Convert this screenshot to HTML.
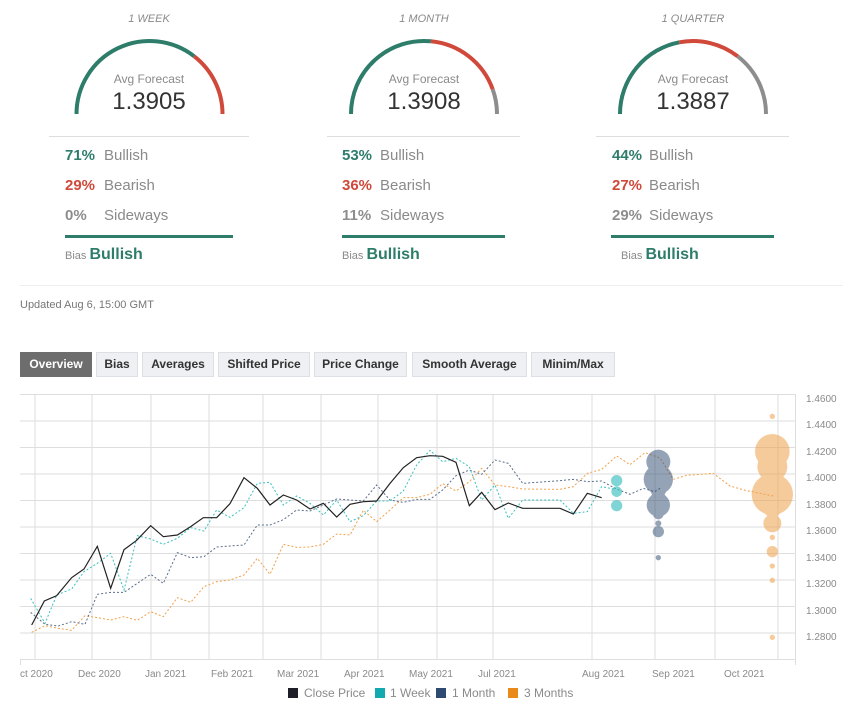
<!DOCTYPE html>
<html><head><meta charset="utf-8"><style>
body{margin:0;width:865px;height:711px;background:#fff;font-family:"Liberation Sans",sans-serif;position:relative;overflow:hidden}
.a{position:absolute;white-space:nowrap}
.t{font-size:11px;font-style:italic;color:#8a8a8a;transform:translateX(-50%)}
.af{font-size:12px;color:#8a8a8a;transform:translateX(-50%)}
.v{font-size:24px;color:#333;transform:translateX(-50%)}
.p{font-size:15px;font-weight:bold}
.l{font-size:15px;color:#8a8a8a}
.g{color:#2e7d6b}.r{color:#d0493a}.s{color:#8d8d8d}
.hl{position:absolute;height:1px;background:#ddd}
.gl{position:absolute;height:3px;background:#2e7d6b}
.tab{position:absolute;top:352px;height:23px;border:1px solid #dcdfe4;background:#eef0f3;font-size:12px;font-weight:bold;color:#333;line-height:23px;text-align:center}
.ax{font-size:10px;fill:#8a8a8a;font-family:"Liberation Sans",sans-serif}
</style></head><body>
<svg class="a" style="left:0;top:0" width="865" height="140">
<g fill="none" stroke-width="4">
<path d="M76.5 114 A73 73 0 0 1 194.2 56.3" stroke="#2e7d6b"/>
<path d="M194.2 56.3 A73 73 0 0 1 222.5 114" stroke="#d0493a"/>
<path d="M351 114 A73 73 0 0 1 430.9 41.3" stroke="#2e7d6b"/>
<path d="M430.9 41.3 A73 73 0 0 1 492.7 89.3" stroke="#d0493a"/>
<path d="M492.7 89.3 A73 73 0 0 1 497 114" stroke="#8d8d8d"/>
<path d="M620 114 A73 73 0 0 1 679.3 42.3" stroke="#2e7d6b"/>
<path d="M679.3 42.3 A73 73 0 0 1 737.7 56.3" stroke="#d0493a"/>
<path d="M737.7 56.3 A73 73 0 0 1 766 114" stroke="#8d8d8d"/>
</g></svg>
<div class="a t" style="left:149px;top:13px">1 WEEK</div>
<div class="a t" style="left:424px;top:13px">1 MONTH</div>
<div class="a t" style="left:693px;top:13px">1 QUARTER</div>
<div class="a af" style="left:149px;top:72px">Avg Forecast</div>
<div class="a af" style="left:424px;top:72px">Avg Forecast</div>
<div class="a af" style="left:693px;top:72px">Avg Forecast</div>
<div class="a v" style="left:149px;top:88px">1.3905</div>
<div class="a v" style="left:424px;top:88px">1.3908</div>
<div class="a v" style="left:693px;top:88px">1.3887</div>
<div class="hl" style="left:49px;top:136px;width:200px"></div>
<div class="hl" style="left:327px;top:136px;width:193px"></div>
<div class="hl" style="left:596px;top:136px;width:193px"></div>

<div class="a p g" style="left:65px;top:147px">71%</div><div class="a l" style="left:104px;top:147px">Bullish</div>
<div class="a p r" style="left:65px;top:177px">29%</div><div class="a l" style="left:104px;top:177px">Bearish</div>
<div class="a p s" style="left:65px;top:207px">0%</div><div class="a l" style="left:104px;top:207px">Sideways</div>
<div class="a p g" style="left:342px;top:147px">53%</div><div class="a l" style="left:380px;top:147px">Bullish</div>
<div class="a p r" style="left:342px;top:177px">36%</div><div class="a l" style="left:380px;top:177px">Bearish</div>
<div class="a p s" style="left:342px;top:207px">11%</div><div class="a l" style="left:380px;top:207px">Sideways</div>
<div class="a p g" style="left:612px;top:147px">44%</div><div class="a l" style="left:649px;top:147px">Bullish</div>
<div class="a p r" style="left:612px;top:177px">27%</div><div class="a l" style="left:649px;top:177px">Bearish</div>
<div class="a p s" style="left:612px;top:207px">29%</div><div class="a l" style="left:649px;top:207px">Sideways</div>
<div class="gl" style="left:65px;top:235px;width:168px"></div>
<div class="gl" style="left:342px;top:235px;width:163px"></div>
<div class="gl" style="left:611px;top:235px;width:163px"></div>
<div class="a" style="left:65px;top:246px"><span style="font-size:11px;color:#8a8a8a">Bias </span><span style="font-size:16px;font-weight:bold;color:#2e7d6b">Bullish</span></div>
<div class="a" style="left:342px;top:246px"><span style="font-size:11px;color:#8a8a8a">Bias </span><span style="font-size:16px;font-weight:bold;color:#2e7d6b">Bullish</span></div>
<div class="a" style="left:621px;top:246px"><span style="font-size:11px;color:#8a8a8a">Bias </span><span style="font-size:16px;font-weight:bold;color:#2e7d6b">Bullish</span></div>
<div class="hl" style="left:20px;top:285px;width:823px;background:#eceef2"></div>
<div class="a" style="left:20px;top:299px;font-size:11px;color:#777">Updated Aug 6, 15:00 GMT</div>

<div class="tab" style="left:20px;width:70px;background:#6d6d6d;border-color:#6d6d6d;color:#fff">Overview</div>
<div class="tab" style="left:96px;width:40px">Bias</div>
<div class="tab" style="left:142px;width:70px">Averages</div>
<div class="tab" style="left:218px;width:90px">Shifted Price</div>
<div class="tab" style="left:314px;width:91px">Price Change</div>
<div class="tab" style="left:412px;width:113px">Smooth Average</div>
<div class="tab" style="left:531px;width:82px">Minim/Max</div>

<svg class="a" style="left:0;top:0" width="865" height="711">
<g stroke="#dedede" stroke-width="1">
<line x1="20" x2="796" y1="394.5" y2="394.5"/><line x1="20" x2="796" y1="421" y2="421"/><line x1="20" x2="796" y1="447.5" y2="447.5"/><line x1="20" x2="796" y1="474" y2="474"/><line x1="20" x2="796" y1="500.5" y2="500.5"/><line x1="20" x2="796" y1="527" y2="527"/><line x1="20" x2="796" y1="553.5" y2="553.5"/><line x1="20" x2="796" y1="580" y2="580"/><line x1="20" x2="796" y1="606.5" y2="606.5"/><line x1="20" x2="796" y1="633" y2="633"/><line x1="20" x2="796" y1="659.5" y2="659.5"/>
<line x1="35" x2="35" y1="394" y2="660"/><line x1="92" x2="92" y1="394" y2="660"/><line x1="151" x2="151" y1="394" y2="660"/><line x1="209" x2="209" y1="394" y2="660"/><line x1="263" x2="263" y1="394" y2="660"/><line x1="321" x2="321" y1="394" y2="660"/><line x1="378" x2="378" y1="394" y2="660"/><line x1="437" x2="437" y1="394" y2="660"/><line x1="493" x2="493" y1="394" y2="660"/><line x1="592" x2="592" y1="394" y2="660"/><line x1="655" x2="655" y1="394" y2="660"/><line x1="715" x2="715" y1="394" y2="660"/><line x1="778" x2="778" y1="394" y2="660"/><line x1="795.5" x2="795.5" y1="394" y2="665"/><line x1="20.5" x2="20.5" y1="660" y2="665"/>
</g>
<g class="ax">
<text x="806" y="402">1.4600</text><text x="806" y="428">1.4400</text><text x="806" y="455">1.4200</text><text x="806" y="481">1.4000</text><text x="806" y="508">1.3800</text><text x="806" y="534">1.3600</text><text x="806" y="561">1.3400</text><text x="806" y="587">1.3200</text><text x="806" y="614">1.3000</text><text x="806" y="640">1.2800</text>
<text x="20" y="677">ct 2020</text><text x="78" y="677">Dec 2020</text><text x="145" y="677">Jan 2021</text><text x="211" y="677">Feb 2021</text><text x="277" y="677">Mar 2021</text><text x="344" y="677">Apr 2021</text><text x="409" y="677">May 2021</text><text x="478" y="677">Jul 2021</text><text x="582" y="677">Aug 2021</text><text x="652" y="677">Sep 2021</text><text x="724" y="677">Oct 2021</text>
</g>
<g transform="translate(0,385) scale(0.33333)" fill="none">
<polyline vector-effect="non-scaling-stroke" stroke="#f0a14a" stroke-width="1" stroke-dasharray="2,2" points="95,742 135,722 175,730 215,736 255,692 292,698 332,705 372,695 412,706 452,680 490,695 532,638 572,652 612,605 650,590 690,585 732,570 772,520 810,568 850,478 890,487 930,486 970,478 1010,447 1050,450 1090,376 1130,410 1170,375 1210,338 1250,338 1290,328 1328,296 1368,318 1408,290 1445,250 1485,300 1525,305 1568,312 1680,313 1720,305 1762,265 1805,253 1850,213 1890,239 1935,203 1980,219 2020,283 2060,271 2140,265 2190,303 2240,317 2320,333"/>
<polyline vector-effect="non-scaling-stroke" stroke="#5a6e8c" stroke-width="1" stroke-dasharray="2,2" points="92,682 135,718 175,723 215,710 255,718 292,628 332,622 372,622 412,595 452,568 490,595 532,503 572,518 612,515 650,486 690,483 732,480 772,420 810,420 850,404 890,375 930,378 970,360 1010,342 1050,345 1090,348 1130,300 1170,345 1210,352 1250,343 1290,343 1328,315 1368,272 1408,255 1445,268 1485,225 1525,235 1568,295 1680,287 1720,283 1762,290 1805,288 1845,310 1890,328 1930,310 1964,320 1980,310"/>
<polyline vector-effect="non-scaling-stroke" stroke="#3bbfbf" stroke-width="1" stroke-dasharray="2,2" points="92,640 135,715 170,630 215,612 252,560 292,535 332,505 372,615 412,452 452,462 490,478 532,460 572,428 612,438 650,375 690,397 732,368 772,295 810,292 850,360 890,333 930,355 970,390 1010,345 1050,410 1090,392 1130,348 1170,348 1210,318 1250,240 1290,196 1328,230 1368,220 1408,245 1445,345 1485,300 1525,400 1568,345 1680,345 1720,385 1762,380 1805,305 1845,313"/>
<polyline vector-effect="non-scaling-stroke" stroke="#222" stroke-width="1.2" points="95,720 133,648 170,632 215,578 252,552 292,484 332,610 372,494 410,466 452,422 490,455 532,450 572,425 610,398 650,398 690,356 732,278 772,310 810,360 850,330 890,345 930,372 970,355 1010,396 1050,358 1090,350 1130,348 1170,295 1210,248 1250,218 1290,212 1328,214 1368,232 1408,362 1445,322 1485,374 1525,354 1568,370 1680,370 1720,387 1762,325 1805,338"/>
</g>
<g transform="translate(560,390) scale(0.33333)">
<g fill="#3bbfbf" opacity="0.65"><circle cx="170" cy="272" r="17"/><circle cx="170" cy="305" r="16"/><circle cx="170" cy="347" r="17"/></g>
<g fill="#2e4a70" opacity="0.5"><circle cx="295" cy="215" r="36"/><circle cx="293" cy="208" r="15"/><circle cx="295" cy="245" r="9"/><circle cx="295" cy="268" r="44"/><circle cx="295" cy="298" r="24"/><circle cx="295" cy="345" r="35"/><circle cx="295" cy="330" r="25"/><circle cx="295" cy="372" r="16"/><circle cx="295" cy="400" r="9"/><circle cx="295" cy="425" r="17"/><circle cx="295" cy="503" r="8"/></g>
<g fill="#f0a14a" opacity="0.55"><circle cx="637" cy="79" r="8"/><circle cx="637" cy="184" r="52"/><circle cx="637" cy="230" r="45"/><circle cx="637" cy="268" r="25"/><circle cx="637" cy="313" r="62"/><circle cx="637" cy="355" r="27"/><circle cx="637" cy="400" r="27"/><circle cx="637" cy="442" r="8"/><circle cx="637" cy="485" r="17"/><circle cx="637" cy="528" r="8"/><circle cx="637" cy="571" r="8"/><circle cx="637" cy="742" r="8"/></g>
</g>
<g font-size="12" fill="#8a8a8a" font-family="Liberation Sans,sans-serif">
<rect x="288" y="688" width="10" height="10" fill="#1e1e28"/><text x="304" y="697">Close Price</text>
<rect x="375" y="688" width="10" height="10" fill="#10aab0"/><text x="390" y="697">1 Week</text>
<rect x="436" y="688" width="10" height="10" fill="#2e4a70"/><text x="452" y="697">1 Month</text>
<rect x="508" y="688" width="10" height="10" fill="#e8891a"/><text x="524" y="697">3 Months</text>
</g>
</svg>
</body></html>
